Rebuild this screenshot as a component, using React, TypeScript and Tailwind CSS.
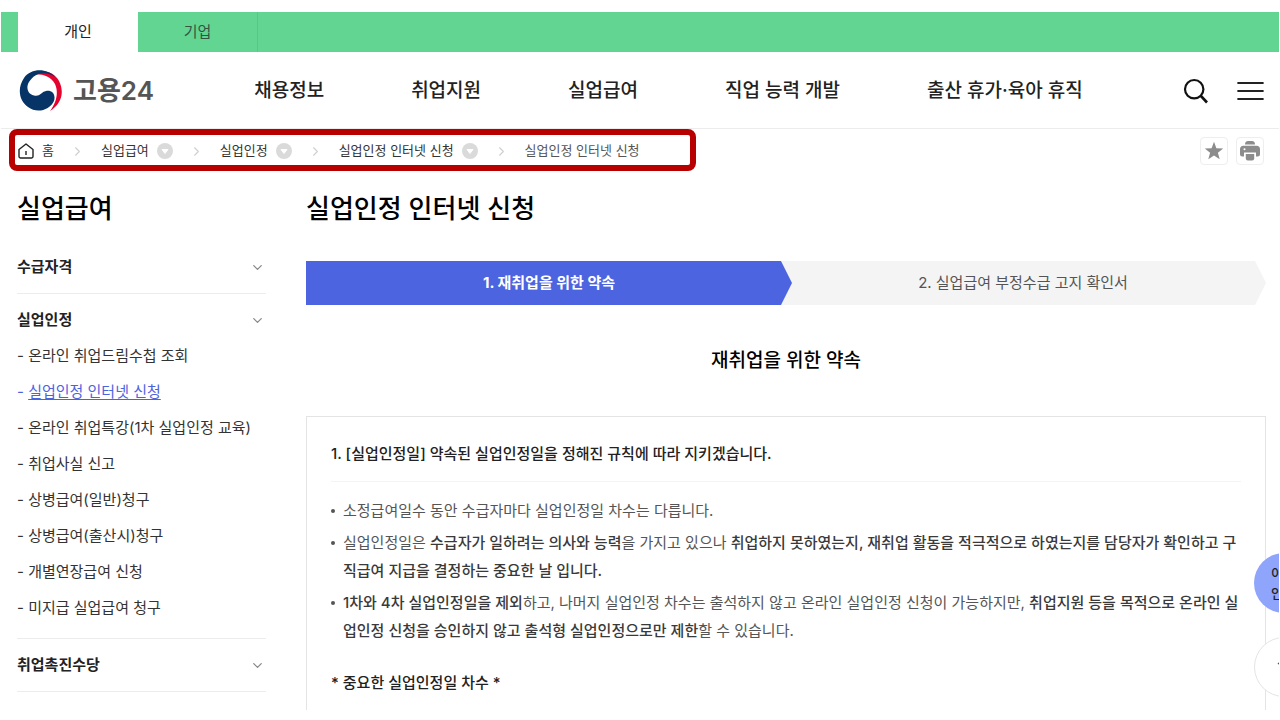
import { ChevronDown, ChevronRight } from 'lucide-react';

const NAV = ['채용정보', '취업지원', '실업급여', '직업 능력 개발', '출산 휴가·육아 휴직'];

const CRUMBS = ['실업급여', '실업인정', '실업인정 인터넷 신청'];

const SUB_MENU = [
  '온라인 취업드림수첩 조회',
  '실업인정 인터넷 신청',
  '온라인 취업특강(1차 실업인정 교육)',
  '취업사실 신고',
  '상병급여(일반)청구',
  '상병급여(출산시)청구',
  '개별연장급여 신청',
  '미지급 실업급여 청구',
];

function Logo() {
  return (
    <a href="#" className="flex items-center gap-2.5 text-[26px] leading-10 font-semibold text-[#555]">
      <svg width="44" height="44" viewBox="0 0 44 44" aria-hidden="true">
        <path d="M12 6 C22 -1 35 2 40 12 C46 24 42 35 31 42 C37 34 40 24 36 15 C31 6 20 4 12 6Z" fill="#e4032e" />
        <path
          d="M36 8 C28 -1 12 -1 5 9 C-2 19 0 32 9 38 C18 45 31 41 35 32 C37 25 33 21 27 22 C22 23 21 28 15 26.500 C8 25 7 18 10 13 C15 4 27 1 36 8Z"
          fill="#063466"
        />
      </svg>
      고용24
    </a>
  );
}

function UtilityTabs() {
  return (
    <div className="mt-3 flex h-10 shrink-0 bg-[#62d592] pl-[17px] text-[15px]">
      <button type="button" className="w-[120px] bg-white text-[#222]">개인</button>
      <button type="button" className="w-[120px] border-r border-[#5ac586] text-[#335542]">기업</button>
    </div>
  );
}

function Header() {
  return (
    <header className="flex h-[77px] shrink-0 items-center justify-between border-b border-[#ececec] pt-0.5 pr-[15px] pl-[18px]">
      <Logo />
      <nav className="flex gap-[87px] text-[19px] font-medium text-[#222]">
        {NAV.map((item) => (
          <a key={item} href="#">{item}</a>
        ))}
      </nav>
      <div className="flex items-center gap-7">
        <button type="button" aria-label="검색">
          <svg width="26" height="26" viewBox="0 0 26 26" fill="none" stroke="#111" strokeWidth="2.2">
            <circle cx="11.2" cy="11.2" r="9.2" />
            <path d="M17.5 17.5 24 24.5" strokeWidth="2.6" />
          </svg>
        </button>
        <button type="button" aria-label="전체메뉴">
          <svg width="27" height="20" viewBox="0 0 27 20" stroke="#222" strokeWidth="2.2" strokeLinecap="round">
            <path d="M1.2 2H25.8M1.2 10H25.8M1.2 18H25.8" />
          </svg>
        </button>
      </div>
    </header>
  );
}

function Breadcrumb() {
  return (
    <div className="flex shrink-0 items-center justify-between pr-[15px] pl-2">
      <nav
        aria-label="breadcrumb"
        className="flex h-[42px] w-[687px] items-center rounded-lg border-6 border-[#b80000] pt-0.5 pl-[3px] text-[13px] text-[#333]"
      >
        <a href="#" className="flex items-center gap-2">
          <svg width="16" height="16" viewBox="0 0 16 16" fill="none" stroke="#222" strokeWidth="1.4" strokeLinejoin="round">
            <path d="M1 6.5 8 1l7 5.5V13.6a1.4 1.4 0 0 1-1.4 1.4H2.4A1.4 1.4 0 0 1 1 13.600Z" />
            <path d="M8 8v4" />
          </svg>
          홈
        </a>
        {CRUMBS.map((crumb) => (
          <span key={crumb} className="flex items-center">
            <ChevronRight className="mx-4 text-[#d0d0d0]" size={15} strokeWidth={1.8} />
            <a href="#">{crumb}</a>
            <button type="button" aria-label={crumb} className="ml-2">
              <svg width="16" height="16" viewBox="0 0 16 16">
                <circle cx="8" cy="8" r="8" fill="#dadada" />
                <path d="M5 6.500h6L8 10.500Z" fill="#fff" stroke="#fff" strokeLinejoin="round" />
              </svg>
            </button>
          </span>
        ))}
        <ChevronRight className="mx-4 text-[#d0d0d0]" size={15} strokeWidth={1.8} />
        <span className="text-[#555]">{CRUMBS[2]}</span>
      </nav>
      <div className="flex gap-2 pt-0.5">
        <button type="button" aria-label="즐겨찾기" className="flex size-7 items-center justify-center rounded border border-[#eee]">
          <svg width="20" height="20" viewBox="0 0 20 20" fill="#8c8c8c">
            <path d="M10 .8 12.400 7.200 19.200 7.500 13.900 11.700 15.700 18.300 10 14.500 4.300 18.300 6.100 11.700 .8 7.500 7.600 7.200Z" />
          </svg>
        </button>
        <button type="button" aria-label="인쇄" className="flex size-7 items-center justify-center rounded border border-[#eee]">
          <svg width="20" height="20" viewBox="0 0 20 20" fill="#8c8c8c">
            <path d="M5 3.500Q5 0 8 0h4q3 0 3 3.500Z" />
            <path d="M3.500 4.800h13Q20 4.800 20 8.300V13q0 2.500-2.500 2.500H16V11.500H4v4H2.500Q0 15.500 0 13V8.300Q0 4.800 3.500 4.800Z" />
            <circle cx="4.500" cy="8.300" r="1" fill="#fff" />
            <path d="M5.800 13h8.400v4.500q0 2-2 2H7.800q-2 0-2-2Z" />
          </svg>
        </button>
      </div>
    </div>
  );
}

function MenuGroup({ title, children }: { title: string; children?: React.ReactNode }) {
  return (
    <section className="border-b border-[#ececec]">
      <button type="button" className="flex h-[52px] w-full items-center justify-between pr-px text-[15px] font-bold text-[#222]">
        {title}
        <ChevronDown size={15} strokeWidth={2} className="text-[#888]" />
      </button>
      {children}
    </section>
  );
}

function Sidebar() {
  return (
    <aside className="w-[249px] shrink-0">
      <h2 className="mb-[13px] text-[26px] leading-[38px] font-medium text-black">실업급여</h2>
      <MenuGroup title="수급자격" />
      <MenuGroup title="실업인정">
        <ul className="-mt-2 pb-3 text-[15px] leading-9 text-[#333]">
          {SUB_MENU.map((item, i) => (
            <li key={item} className={i === 1 ? 'text-[#4c63e0]' : ''}>
              {'- '}
              <a href="#" className={i === 1 ? 'underline underline-offset-2' : ''}>{item}</a>
            </li>
          ))}
        </ul>
      </MenuGroup>
      <MenuGroup title="취업촉진수당" />
    </aside>
  );
}

function Steps() {
  return (
    <ol className="flex h-11 bg-[#f4f4f4] text-[15px] [clip-path:polygon(0_0,calc(100%-11px)_0,100%_50%,calc(100%-11px)_100%,0_100%)]">
      <li className="flex flex-1 items-center justify-center bg-[#4c64e0] font-bold text-white [clip-path:polygon(0_0,calc(100%-11px)_0,100%_50%,calc(100%-11px)_100%,0_100%)]">
        1. 재취업을 위한 약속
      </li>
      <li className="-ml-3 flex flex-1 items-center justify-center text-[#555]">2. 실업급여 부정수급 고지 확인서</li>
    </ol>
  );
}

function Bullet({ children }: { children: React.ReactNode }) {
  return (
    <li className="flex gap-2">
      <span className="mt-3 size-1 shrink-0 rounded-full bg-[#555]" />
      <p>{children}</p>
    </li>
  );
}

function Pledge() {
  return (
    <article className="border border-[#e4e4e4] px-6 pt-[22px] pb-20 text-[15px] leading-7 text-[#555] [&_b]:font-medium [&_b]:text-[#3a3a3a]">
      <h4 className="mb-[15px] border-b border-[#f4f4f4] pb-3 leading-[30px] font-medium text-[#222]">
        1. [실업인정일] 약속된 실업인정일을 정해진 규칙에 따라 지키겠습니다.
      </h4>
      <ul className="flex flex-col gap-1">
        <Bullet>소정급여일수 동안 수급자마다 실업인정일 차수는 다릅니다.</Bullet>
        <Bullet>
          실업인정일은 <b>수급자가 일하려는 의사와 능력</b>을 가지고 있으나{' '}
          <b>취업하지 못하였는지, 재취업 활동을 적극적으로 하였는지를 담당자가 확인하고 구직급여 지급을 결정하는 중요한 날 입니다.</b>
        </Bullet>
        <Bullet>
          <b>1차와 4차 실업인정일을 제외</b>하고, 나머지 실업인정 차수는 출석하지 않고 온라인 실업인정 신청이 가능하지만,{' '}
          <b>취업지원 등을 목적으로 온라인 실업인정 신청을 승인하지 않고 출석형 실업인정으로만 제한</b>할 수 있습니다.
        </Bullet>
      </ul>
      <p className="mt-6 font-medium text-[#222]">* 중요한 실업인정일 차수 *</p>
    </article>
  );
}

function QuickButtons() {
  return (
    <div className="absolute -right-[35px] bottom-[13px] flex flex-col gap-6">
      <button type="button" className="size-[60px] rounded-full bg-[#8fa5fc] pl-[17px] text-left text-[13px] leading-5 font-medium text-[#222]">
        이<br />인
      </button>
      <button type="button" aria-label="맨 위로" className="flex size-[60px] items-center rounded-full border border-[#e4e4e4] bg-white pl-[22px]">
        <svg width="14" height="18" viewBox="0 0 14 18" fill="none" stroke="#555" strokeWidth="1.500">
          <path d="M1 6 7 1l6 5" />
        </svg>
      </button>
    </div>
  );
}

export default function App() {
  return (
    <div className="h-screen bg-white pb-[10px] font-['Inter','Noto_Sans_CJK_KR',sans-serif]">
      <div className="relative mx-px flex h-full flex-col overflow-hidden">
        <UtilityTabs />
        <Header />
        <Breadcrumb />
        <div className="flex shrink-0 gap-10 pt-[19px] pr-[13px] pl-4">
          <Sidebar />
          <main className="min-w-0 flex-1">
            <h1 className="mb-[33px] text-[26px] leading-[38px] font-medium text-black">실업인정 인터넷 신청</h1>
            <Steps />
            <h3 className="mt-10 mb-[39px] text-center text-[19px] leading-8 font-medium text-black">재취업을 위한 약속</h3>
            <Pledge />
          </main>
        </div>
        <QuickButtons />
      </div>
    </div>
  );
}
